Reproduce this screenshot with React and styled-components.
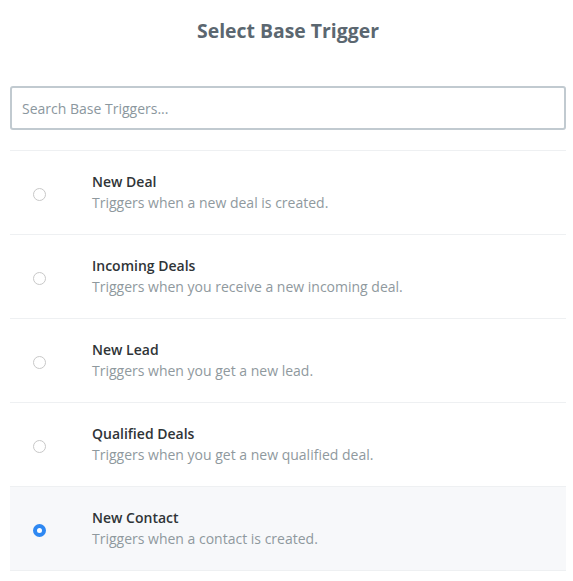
import styled, { createGlobalStyle } from "styled-components"

const triggers = [
    { id: 1, nombre: "New Deal", texto: "Triggers when a new deal is created." },
    { id: 2, nombre: "Incoming Deals", texto: "Triggers when you receive a new incoming deal." },
    { id: 3, nombre: "New Lead", texto: "Triggers when you get a new lead." },
    { id: 4, nombre: "Qualified Deals", texto: "Triggers when you get a new qualified deal." },
    { id: 5, nombre: "New Contact", texto: "Triggers when a contact is created." },
]

const App = () => {
    const seleccionado = 5

  return (
    <>
        <Global />
        <Contenedor>
            <Titulo>Select Base Trigger</Titulo>
            <Buscador type="text" placeholder="Search Base Triggers..." autoComplete="off" />
            <Lista>
                {triggers.map((t) => (
                    <Fila key={t.id} activo={t.id === seleccionado}>
                        <Radio activo={t.id === seleccionado} />
                        <div>
                            <Nombre>{ t.nombre }</Nombre>
                            <Descripcion>{ t.texto }</Descripcion>
                        </div>
                    </Fila>
                ))}
            </Lista>
        </Contenedor>
    </>
  )
}

const Global = createGlobalStyle`
    body {
        margin: 0;
        background: #fff;
        font-family: "Open Sans", "Noto Sans", sans-serif;
    }
`;

const Contenedor = styled.div`
    padding: 0 7px 0 10px;
`;

const Titulo = styled.h1`
    margin: 0;
    padding-top: 17px;
    height: 86px;
    box-sizing: border-box;
    text-align: center;
    font-size: 19.4px;
    line-height: 28px;
    font-weight: 700;
    color: #5b6770;
`;

const Buscador = styled.input`
    display: block;
    width: 100%;
    height: 44px;
    box-sizing: border-box;
    border: 2px solid #c1cad0;
    border-radius: 3px;
    padding: 0 10px;
    font-family: inherit;
    font-size: 14px;
    color: #333;
    outline: none;

    &::placeholder {
        color: #8b979e;
    }
`;

const Lista = styled.div`
    margin-top: 20px;
    border-top: 1px solid #eef0f2;
`;

const Fila = styled.div`
    display: flex;
    align-items: center;
    height: 84px;
    box-sizing: border-box;
    padding-bottom: 1px;
    border-bottom: 1px solid #eef0f2;
    background: ${({ activo }) => activo ? "#f7f8fa" : "#fff"};
`;

const Radio = styled.span`
    flex: none;
    width: 13px;
    height: 13px;
    box-sizing: border-box;
    margin: 4px 46px 0 23px;
    border-radius: 50%;
    border: ${({ activo }) => activo ? "4.5px solid #2e88f2" : "1px solid #c8c8c8"};
    background: #fff;
`;

const Nombre = styled.p`
    margin: 0;
    font-size: 14px;
    line-height: 20px;
    font-weight: 600;
    color: #2f3437;
`;

const Descripcion = styled.p`
    margin: 0;
    font-size: 14px;
    line-height: 21px;
    color: #8f999e;
`;

export default App
